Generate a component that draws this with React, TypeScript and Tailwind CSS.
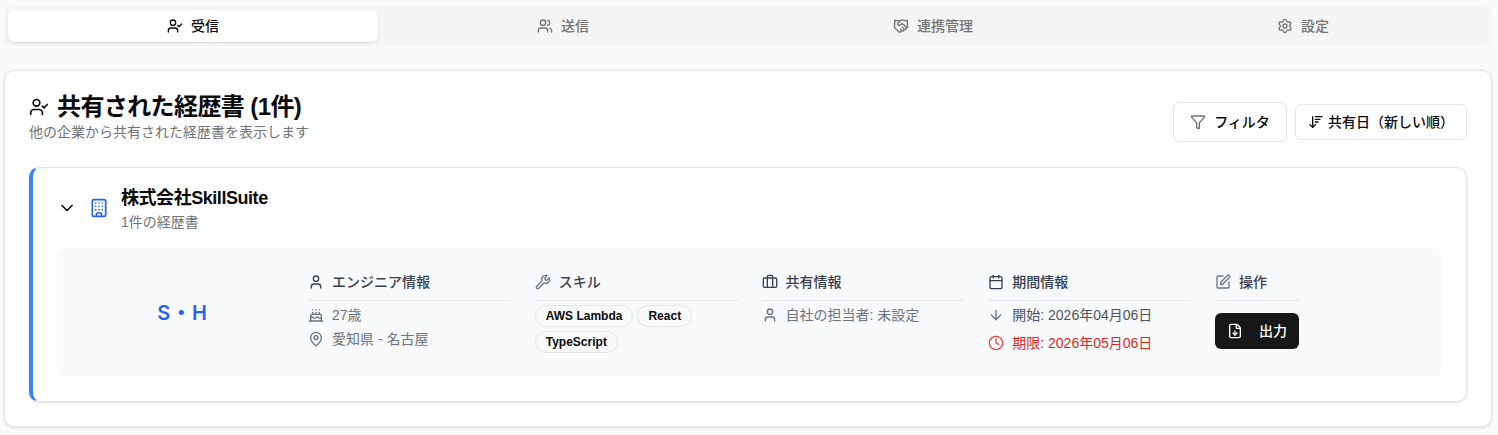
import { UserCheck, Users, Handshake, Settings, Funnel, ArrowDownWideNarrow, ChevronDown, Building, User, Cake, MapPin, Wrench, Briefcase, Calendar, ArrowDown, Clock, SquarePen, FileDown } from "lucide-react";
import type { ReactNode } from "react";

const font = "font-['Liberation_Sans','Noto_Sans_CJK_JP',sans-serif]";

function Tab({ icon, label, active }: { icon: ReactNode; label: string; active?: boolean }) {
  return (
    <div className={active
      ? "flex-1 h-8 flex items-center justify-center gap-2 rounded-md bg-white text-sm font-medium text-[#0a0a0a] shadow-sm"
      : "flex-1 h-8 flex items-center justify-center gap-2 rounded-md text-sm font-medium text-[#737373]"}>
      {icon}
      <span>{label}</span>
    </div>
  );
}

function ColHead({ icon, label }: { icon: ReactNode; label: string }) {
  return (
    <div className="flex items-center gap-2 h-5 pb-2 mb-1 border-b border-[#e5e7eb] box-content text-sm font-medium text-[#374151]">
      {icon}
      <span>{label}</span>
    </div>
  );
}

function Chip({ label }: { label: string }) {
  return <span className="h-[22px] flex items-center px-[10px] rounded-full border border-[#e5e5e5] text-xs font-semibold text-[#0a0a0a]">{label}</span>;
}

export default function App() {
  return (
    <div className={`${font} min-h-[435px] bg-[#f9fafb] pl-1 pr-[6px] pt-[6px]`}>
      <div className="flex p-1 h-10 rounded-lg bg-[#f5f5f5]">
        <Tab active icon={<UserCheck className="w-4 h-4" />} label="受信" />
        <Tab icon={<Users className="w-4 h-4" />} label="送信" />
        <Tab icon={<Handshake className="w-4 h-4" />} label="連携管理" />
        <Tab icon={<Settings className="w-4 h-4" />} label="設定" />
      </div>

      <div className="mt-6 h-[357px] rounded-[10px] border border-[#e5e5e5] bg-white shadow-sm pt-[22px] px-6">
        <div className="flex items-start justify-between">
          <div>
            <div className="flex items-center gap-2 h-7">
              <UserCheck className="w-5 h-5 text-[#0a0a0a]" />
              <h2 className="text-2xl font-bold tracking-tight text-[#0a0a0a]">共有された経歴書 (1件)</h2>
            </div>
            <p className="text-sm text-[#737373] mt-[1px]">他の企業から共有された経歴書を表示します</p>
          </div>
          <div className="flex items-center gap-2 mt-[9px]">
            <button className="h-10 w-[114px] flex items-center justify-center gap-2 rounded-md border border-[#e5e5e5] bg-white text-sm font-medium text-[#0a0a0a]">
              <Funnel className="w-4 h-4 text-[#6b7280]" />
              フィルタ
            </button>
            <button className="h-9 w-[172px] flex items-center pl-3 gap-1 rounded-md border border-[#e5e5e5] bg-white text-sm font-medium text-[#0a0a0a]">
              <ArrowDownWideNarrow className="w-4 h-4" />
              共有日（新しい順）
            </button>
          </div>
        </div>

        <div className="mt-[25px] h-[235px] rounded-[10px] border border-[#e5e5e5] border-l-4 border-l-[#3b82f6] bg-white shadow-sm">
          <div className="flex items-center gap-3 pl-6 pt-4">
            <ChevronDown className="w-5 h-5 text-[#0a0a0a]" />
            <Building className="w-5 h-5 text-[#2563eb]" />
            <div>
              <div className="text-lg font-bold tracking-tight text-[#0a0a0a]">株式会社SkillSuite</div>
              <div className="text-sm text-[#737373]">1件の経歴書</div>
            </div>
          </div>

          <div className="mx-6 mt-4 h-[129px] rounded-lg bg-[#f9fafb] flex pt-6 pl-[251px] gap-6 relative">
            <div className="absolute left-0 top-0 w-[251px] h-full flex items-center justify-center font-['Inter','Noto_Sans_CJK_JP',sans-serif] text-xl font-semibold tracking-[0.04em] text-[#2563eb]">S・H</div>
            <div className="w-[202.75px]">
              <ColHead icon={<User className="w-4 h-4 text-[#374151]" />} label="エンジニア情報" />
              <div className="flex items-center gap-2 h-5 text-sm text-[#6b7280]"><Cake className="w-4 h-4" />27歳</div>
              <div className="flex items-center gap-2 h-5 mt-1 text-sm text-[#6b7280]"><MapPin className="w-4 h-4" />愛知県 - 名古屋</div>
            </div>
            <div className="w-[202.75px]">
              <ColHead icon={<Wrench className="w-4 h-4 text-[#6b7280]" />} label="スキル" />
              <div className="flex flex-wrap gap-x-1 gap-y-1">
                <Chip label="AWS Lambda" /><Chip label="React" /><Chip label="TypeScript" />
              </div>
            </div>
            <div className="w-[202.75px]">
              <ColHead icon={<Briefcase className="w-4 h-4 text-[#374151]" />} label="共有情報" />
              <div className="flex items-center gap-2 h-5 text-sm text-[#6b7280]"><User className="w-4 h-4" />自社の担当者: 未設定</div>
            </div>
            <div className="w-[202.75px]">
              <ColHead icon={<Calendar className="w-4 h-4 text-[#374151]" />} label="期間情報" />
              <div className="flex items-center gap-2 h-5 text-sm text-[#4b5563]"><ArrowDown className="w-4 h-4 text-[#6b7280]" />開始: 2026年04月06日</div>
              <div className="flex items-center gap-2 h-5 mt-2 text-sm text-[#dc2626]"><Clock className="w-4 h-4 text-[#ef4444]" />期限: 2026年05月06日</div>
            </div>
            <div className="w-[84px]">
              <ColHead icon={<SquarePen className="w-4 h-4 text-[#6b7280]" />} label="操作" />
              <button className="mt-3 h-9 w-full flex items-center justify-center gap-4 rounded-md bg-[#171717] text-sm font-medium text-white">
                <FileDown className="w-4 h-4" />出力
              </button>
            </div>
          </div>
        </div>
      </div>
    </div>
  );
}
